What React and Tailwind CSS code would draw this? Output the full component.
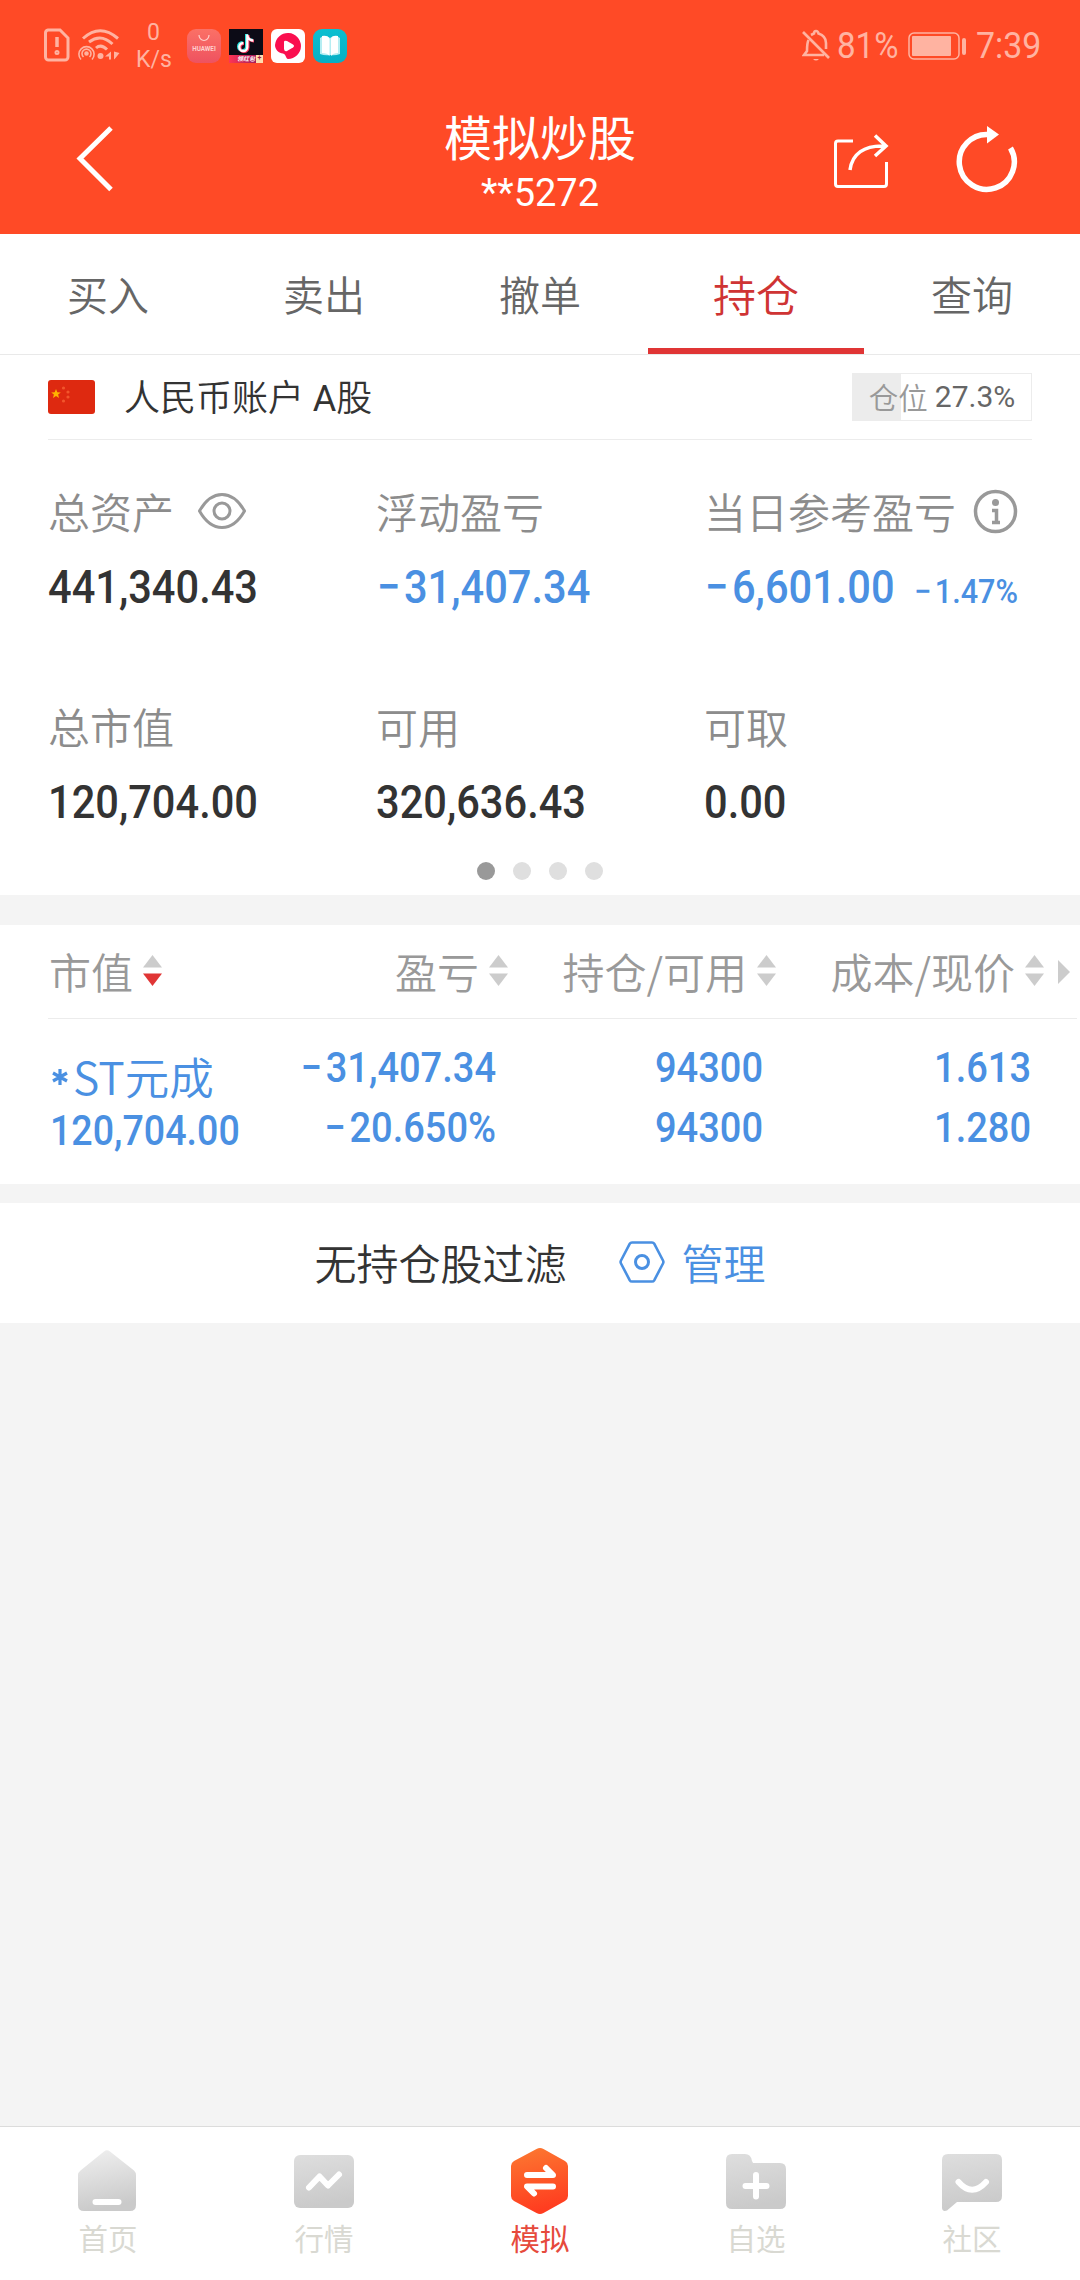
import React from "react";
import clsx from "clsx";

const TABS = ["买入", "卖出", "撤单", "持仓", "查询"];

const HOLDINGS = [
  {
    name: "ST元成",
    value: "120,704.00",
    profit: "−31,407.34",
    rate: "−20.650%",
    amount: "94300",
    available: "94300",
    cost: "1.613",
    price: "1.280",
  },
];

// Condensed figures; the minus sign gets a little extra room after it
function Num({ children, className }) {
  const negative = children.startsWith("−");
  return (
    <div className={clsx("font-['Roboto'] font-medium whitespace-nowrap", className)}>
      {negative && <span className="mr-[4px]">−</span>}
      {negative ? children.slice(1) : children}
    </div>
  );
}

function StatusBar() {
  return (
    <div className="h-[92px] flex items-start justify-between pl-[44px] pr-[39px] text-[#ffb3a1] font-['Roboto'] font-normal">
      <div className="flex items-start">
        <svg className="mt-[28px] w-[26px] h-[34px]" viewBox="0 0 26 34" fill="none" stroke="currentColor" strokeWidth="3">
          <path d="M4 2h12l8 8v19a3 3 0 0 1-3 3H4.500a3 3 0 0 1-3-3V5A3 3 0 0 1 4 2z" />
          <path d="M13 9v10" strokeWidth="3.500" />
          <circle cx="13" cy="24.500" r="1" />
        </svg>
        <svg className="mt-[28px] ml-[8px] w-[42px] h-[34px]" viewBox="0 0 42 34" fill="none" stroke="currentColor" strokeWidth="3">
          <path d="M5 10.500Q22 -5 40 10.500" />
          <path d="M11 14Q23 5 34.500 16" />
          <path d="M18 20Q23 15.500 29 21.500" />
          <circle cx="22.500" cy="28" r="3" fill="currentColor" stroke="none" />
          <g strokeWidth="1.600">
            <path d="M3 31.500A7.600 7.600 0 1 1 14 31.500" />
            <path d="M5.500 29A4.500 4.500 0 1 1 11.500 29" />
            <circle cx="8.500" cy="25.500" r="1.500" fill="currentColor" />
          </g>
          <path d="M33 23.500v8h-2v-3h-4zM36 23.500v8l1.500-1.500 4-5z" fill="currentColor" stroke="none" />
        </svg>
        <div className="ml-[16px] mt-[19px] w-[35px] text-center text-[23px] leading-[27px]">
          <div>0</div>
          <div>K/s</div>
        </div>
        <div className="ml-[16px] mt-[29px] flex gap-2">
          <div className="size-[34px] rounded-[9px] bg-gradient-to-b from-[#fb7066] to-[#ee5260] flex flex-col items-center text-[#ffd0cc]">
            <svg className="mt-[6px] w-[12px] h-[7px]" viewBox="0 0 12 7" fill="none" stroke="currentColor" strokeWidth="1.200">
              <path d="M1 0a5 5.500 0 0 0 10 0" />
            </svg>
            <span className="mt-[4px] text-[6.300px] leading-[6px] font-bold">HUAWEI</span>
          </div>
          <div className="size-[34px] bg-[#0c0b16] flex flex-col items-center justify-end">
            <svg className="w-[20px] h-[22px]" viewBox="0 0 20 22" fill="none" strokeWidth="3">
              <path d="M10.500 1v12.500a4 4 0 1 1-4-4M10.500 2a6 6 0 0 0 6 5" stroke="#25e5df" />
              <path d="M12 2v12.500a4 4 0 1 1-4-4M12 3a6 6 0 0 0 6 5" stroke="#fa3760" />
              <path d="M11.300 1.500V14a4 4 0 1 1-4-4M11.300 2.500a6 6 0 0 0 6 5" stroke="#fff" strokeWidth="2.300" />
            </svg>
            <div className="w-full h-[8px] bg-gradient-to-r from-[#ff3454] to-[#8d155b] flex items-center justify-end">
              <span className="text-[6px] leading-[8px] text-white font-bold italic mr-[1px] font-['Noto_Sans_CJK_SC']">领红包</span>
              <span className="w-[7px] h-[8px] bg-[#ffdfb0] text-[#a3204a] text-[7px] leading-[7px] text-center font-bold">+</span>
            </div>
          </div>
          <div className="size-[34px] rounded-[6px] bg-white">
            <svg viewBox="0 0 34 34">
              <path d="M4 16A13 13 0 1 1 17 30C15 30 15 25 12 24.500C8 24 4 21 4 16z" fill="#fa0f4f" />
              <path d="M13 13q0-2 3-1l6 3.500q2 1.500 0 3L16 22q-2.500 1-3-2z" fill="#fff" />
            </svg>
          </div>
          <div className="size-[34px] rounded-[9px] bg-gradient-to-b from-[#0bbfd0] to-[#08aec5]">
            <svg viewBox="0 0 34 34">
              <path d="M7 9q5-4 10 0 5-4 10 0v16q-5 2-10 1-5 1-10-1z" fill="#b5edf2" />
              <path d="M9 7q6-1 7.500 3v17q-2-3-7.500-3zM25 7q-6-1-7 3v17q2-3 7-3z" fill="#fff" />
            </svg>
          </div>
        </div>
      </div>
      <div className="mt-[26px] flex items-center h-[40px] text-[36px] leading-[40px]">
        <svg className="w-[29px] h-[34px]" viewBox="0 0 29 34" fill="none" stroke="currentColor" strokeWidth="2.600">
          <path d="M1 3l26 26" />
          <path d="M9 6q2-1 3-1.500 0-2.500 2-2.500t2.500 2.500Q24 7 24 14v6" />
          <path d="M6.500 11Q5 14 5 22l-3 4h20" />
          <path d="M11 30q3 3 6 0z" fill="currentColor" stroke="none" />
        </svg>
        <span className="ml-[6px] w-[66px] whitespace-nowrap origin-left scale-x-[0.92]">81%</span>
        <svg className="ml-[5px] w-[60px] h-[28px]" viewBox="0 0 60 28" fill="none" stroke="currentColor">
          <rect x="1" y="1" width="50" height="26" rx="5" strokeWidth="1.500" />
          <rect x="4" y="4" width="39" height="20" rx="1" fill="currentColor" stroke="none" />
          <rect x="54" y="6" width="4" height="17" rx="2" fill="currentColor" stroke="none" />
        </svg>
        <span className="ml-[8px] w-[65px] whitespace-nowrap origin-left scale-x-[0.94]">7:39</span>
      </div>
    </div>
  );
}

function Header() {
  return (
    <header className="h-[234px] bg-[#ff4a26]">
      <StatusBar />
      <div className="h-[142px] grid grid-cols-[360px_360px_360px] text-white">
        <svg className="ml-[75px] mt-[33px] w-[40px] h-[68px]" viewBox="0 0 40 68" fill="none" stroke="currentColor" strokeWidth="5">
          <path d="M36 3L5 33.500 36 64.500" />
        </svg>
        <div className="text-center">
          <h1 className="mt-[13px] h-[60px] text-[48px] leading-[60px] font-normal">模拟炒股</h1>
          <p className="mt-[6px] text-[38px] leading-[44px] font-['Roboto'] font-normal">**5272</p>
        </div>
        <div className="flex">
          <svg className="ml-[112px] mt-[42px] w-[58px] h-[60px]" viewBox="0 0 58 60" fill="none" stroke="currentColor" strokeWidth="3">
            <path d="M21 7H6q-2.500 0-2.500 2.500V50q0 2.500 2.500 2.500h46q2.500 0 2.500-2.500V28" />
            <path d="M18 36C20 20 32 11 53 12M43 1.500L54 12 43 22" strokeWidth="3.500" />
          </svg>
          <svg className="ml-[65px] mt-[31px] w-[66px] h-[74px]" viewBox="0 0 66 74" fill="none" stroke="currentColor" strokeWidth="5.500">
            <path d="M55.500 25A27.500 27.500 0 1 1 34 11.500" />
            <path d="M32 3l12 8.500-12 9z" fill="currentColor" stroke="none" />
          </svg>
        </div>
      </div>
    </header>
  );
}

function Tabs() {
  return (
    <nav className="h-[121px] bg-white border-b border-[#e9e9e9] grid grid-cols-5 text-center text-[#666]">
      {TABS.map((tab) => (
        <div
          key={tab}
          className={clsx(
            "h-[120px] pt-[29px] leading-[60px] border-b-[6px]",
            tab === "持仓" ? "border-[#e03535] text-[#cf3434] text-[43px]" : "border-transparent text-[41px]"
          )}
        >
          {tab}
        </div>
      ))}
    </nav>
  );
}

function Stat({ label, icon, value, blue, extra }) {
  return (
    <div>
      <div className="flex items-center h-[60px] text-[42px] leading-[60px] text-[#8c8c8c] whitespace-nowrap">
        {label}
        {icon}
      </div>
      <div
        className={clsx(
          "mt-[16px] h-[60px] leading-[60px] flex items-baseline whitespace-nowrap",
          blue ? "pl-[1px] text-[#4a90e2]" : "text-[#333]"
        )}
      >
        <Num className="text-[47px] origin-left scale-x-[0.885]">{value}</Num>
        {extra && <Num className="-ml-[5px] text-[34px] origin-left scale-x-[0.9]">{extra}</Num>}
      </div>
    </div>
  );
}

function Account() {
  return (
    <section className="h-[540px] bg-white px-12">
      <div className="h-[85px] flex items-center border-b border-[#ececec]">
        <svg className="w-[47px] h-[34px]" viewBox="0 0 47 34">
          <rect width="47" height="34" rx="3" fill="#de2910" />
          <path d="M8 9l1.300 3.200 3.500.2-2.700 2.200.9 3.400-3-1.900-3 1.900.9-3.400-2.700-2.200 3.500-.2z" fill="#ffb300" />
          <g fill="#f2552c">
            <circle cx="15.500" cy="8" r="1.600" />
            <circle cx="20" cy="12" r="1.600" />
            <circle cx="20" cy="17" r="1.600" />
            <circle cx="15.500" cy="21" r="1.600" />
          </g>
        </svg>
        <span className="ml-[29px] pt-[4px] text-[36px] leading-[50px] text-[#333] font-['Roboto','Noto_Sans_CJK_SC',sans-serif]">
          人民币账户 <span className="font-normal">A</span>股
        </span>
        <div className="ml-auto w-[180px] h-[48px] border border-[#ececec] bg-[linear-gradient(to_right,#ececec_48px,#fff_48px)] flex items-center justify-center whitespace-nowrap leading-[46px]">
          <span className="-mt-[2px] text-[29.500px] text-[#999]">仓位</span>
          <span className="ml-[7px] text-[30px] text-[#666] font-['Roboto'] font-normal">27.3%</span>
        </div>
      </div>
      <div className="pt-[41px] grid grid-cols-3 gap-y-[79px]">
        <Stat
          label="总资产"
          value="441,340.43"
          icon={
            <svg className="ml-[24px] w-[48px] h-[38px]" viewBox="0 0 48 38" fill="none" stroke="#999" strokeWidth="3">
              <path d="M1.500 19C8 7.500 15 2.500 24 2.500S40 7.500 46.500 19C40 30.500 33 35.500 24 35.500S8 30.500 1.500 19z" />
              <circle cx="24" cy="19" r="8" />
            </svg>
          }
        />
        <Stat label="浮动盈亏" value="−31,407.34" blue />
        <Stat
          label="当日参考盈亏"
          value="−6,601.00"
          blue
          extra="−1.47%"
          icon={
            <svg className="ml-[17px] shrink-0 w-[45px] h-[45px]" viewBox="0 0 45 45" fill="none" stroke="#999" strokeWidth="3.500">
              <circle cx="22.500" cy="22.500" r="20" />
              <circle cx="22.500" cy="13.500" r="3.500" fill="#999" stroke="none" />
              <path d="M19 21.500h4.500v12M19 33.500h8" />
            </svg>
          }
        />
        <Stat label="总市值" value="120,704.00" />
        <Stat label="可用" value="320,636.43" />
        <Stat label="可取" value="0.00" />
      </div>
      <div className="mt-[30px] flex justify-center gap-[18px]">
        <span className="size-[18px] rounded-full bg-[#999]" />
        <span className="size-[18px] rounded-full bg-[#dfdfdf]" />
        <span className="size-[18px] rounded-full bg-[#dfdfdf]" />
        <span className="size-[18px] rounded-full bg-[#dfdfdf]" />
      </div>
    </section>
  );
}

function SortHead({ label, active }) {
  return (
    <div className="flex items-center justify-end text-[42px] leading-[60px] text-[#999] whitespace-nowrap">
      {label}
      <svg className="ml-[10px] w-[19px] h-[31px]" viewBox="0 0 19 31">
        <path d="M0 12.500L9.500 0 19 12.500z" fill="#ccc" />
        <path d="M0 18.500h19L9.500 31z" fill={active ? "#e03535" : "#ccc"} />
      </svg>
    </div>
  );
}

function Pair({ top, bottom, className }) {
  return (
    <div className={clsx("pt-[19px] text-right text-[42px] leading-[60px]", className)}>
      <Num className="origin-right scale-x-[0.905]">{top}</Num>
      <Num className="origin-right scale-x-[0.905]">{bottom}</Num>
    </div>
  );
}

function Holdings() {
  return (
    <section className="mt-[30px] h-[259px] bg-white pl-12">
      <div className="h-[94px] mr-[3px] pb-[2px] border-b border-[#ececec] flex items-center">
        <div className="w-[114px]">
          <SortHead label="市值" active />
        </div>
        <div className="w-[346px]">
          <SortHead label="盈亏" />
        </div>
        <div className="w-[268px]">
          <SortHead label="持仓/可用" />
        </div>
        <div className="w-[268px]">
          <SortHead label="成本/现价" />
        </div>
        <svg className="ml-[14px] mt-[2px] w-[12px] h-[24px]" viewBox="0 0 12 24">
          <path d="M0 0l12 12L0 24z" fill="#ccc" />
        </svg>
      </div>
      {HOLDINGS.map((h) => (
        <div key={h.name} className="flex text-[#4a90e2]">
          <div className="w-[200px] pt-[27px]">
            <div className="flex items-center h-[60px] text-[44.500px] leading-[60px] whitespace-nowrap">
              <svg className="ml-[4px] mr-[5px] mt-[1px] w-[16px] h-[16px]" viewBox="0 0 16 16" stroke="currentColor" strokeWidth="3.200">
                <path d="M8 0v16M1 4l14 8M15 4L1 12" />
              </svg>
              {h.name}
            </div>
            <Num className="-mt-[5px] ml-[2px] text-[42px] leading-[60px] origin-left scale-x-[0.895]">{h.value}</Num>
          </div>
          <Pair className="w-[248px]" top={h.profit} bottom={h.rate} />
          <Pair className="w-[267px]" top={h.amount} bottom={h.available} />
          <Pair className="w-[268px]" top={h.cost} bottom={h.price} />
        </div>
      ))}
    </section>
  );
}

function FilterRow() {
  return (
    <section className="mt-[19px] h-[120px] pb-[2px] bg-white flex items-center justify-center text-[42px] leading-[60px]">
      <span className="text-[#333]">无持仓股过滤</span>
      <svg className="ml-[52px] w-[46px] h-[42px]" viewBox="0 0 46 42" fill="none" stroke="#4a90e2" strokeWidth="2.600" strokeLinejoin="round">
        <path d="M13 1.500h20q1.500 0 2.200 1.200L44 19.500q.8 1.500 0 3L35.200 39.300Q34.500 40.500 33 40.500H13q-1.500 0-2.200-1.200L2 22.500q-.8-1.500 0-3l8.800-16.800Q11.500 1.500 13 1.500z" />
        <circle cx="23" cy="21" r="6.500" strokeWidth="3" />
      </svg>
      <span className="ml-[17px] text-[#4a90e2]">管理</span>
    </section>
  );
}

const NAV_ITEMS = [
  {
    label: "首页",
    icon: (
      <>
        <path d="M26 6.500q3-2.500 6 0L56 25.500Q58 27.500 58 30v30q0 6-6 6H6q-6 0-6-6V30q0-2.500 2.500-4.500z" fill="url(#light)" stroke="none" />
        <path d="M17.500 57h23" />
      </>
    ),
  },
  {
    label: "行情",
    icon: (
      <>
        <rect y="10" width="60" height="53" rx="6" fill="url(#grey)" stroke="none" />
        <path d="M15 42.500L25.500 31.500 34 40.500 45 29.500" />
      </>
    ),
  },
  {
    label: "模拟",
    active: true,
    icon: (
      <>
        <path d="M26.500 4q3.500-2 7 0L55 16q3 1.800 3 5v30q0 3.200-3 5L33.500 68q-3.500 2-7 0L4 56q-3-1.800-3-5V21q0-3.200 3-5z" fill="url(#orange)" stroke="none" />
        <path d="M17 30h26L36 23M43 41.500H17L24 48.500" />
      </>
    ),
  },
  {
    label: "自选",
    icon: (
      <>
        <path d="M6 9h13q6 0 7 7l1 2h27q6 0 6 6v34q0 6-6 6H6q-6 0-6-6V15Q0 9 6 9z" fill="url(#grey)" stroke="none" />
        <path d="M19.500 41h21M30 30v21.500" />
      </>
    ),
  },
  {
    label: "社区",
    icon: (
      <>
        <path d="M6 9h48q6 0 6 6v36q0 6-6 6H15L5 65.500Q0 67 0 62.500V15Q0 9 6 9z" fill="url(#grey)" stroke="none" />
        <path d="M16.500 37Q30 52.500 44 37" />
      </>
    ),
  },
];

function BottomNav() {
  return (
    <nav className="mt-auto h-[154px] bg-white border-t border-[#dcdcdc] grid grid-cols-5 font-normal">
      {NAV_ITEMS.map((item) => (
        <div key={item.label} className="flex flex-col items-center pt-[18px]">
          <svg className="w-[60px] h-[72px]" viewBox="0 0 60 72" fill="none" stroke="#fff" strokeWidth="6" strokeLinecap="round" strokeLinejoin="round">
            <defs>
              <linearGradient id="light" x1="0" y1="0" x2="0.200" y2="1">
                <stop offset="0" stopColor="#f0f0f0" />
                <stop offset="1" stopColor="#cacaca" />
              </linearGradient>
              <linearGradient id="grey" x1="0" y1="0" x2="0.200" y2="1">
                <stop offset="0" stopColor="#dedede" />
                <stop offset="1" stopColor="#cacaca" />
              </linearGradient>
              <linearGradient id="orange" x1="0" y1="0" x2="0.200" y2="1">
                <stop offset="0" stopColor="#fc7a31" />
                <stop offset="1" stopColor="#ff3d20" />
              </linearGradient>
            </defs>
            {item.icon}
          </svg>
          <span className={clsx("text-[29.500px] leading-[40px]", item.active ? "text-[#e64a3c]" : "text-[#d9d9d2]")}>
            {item.label}
          </span>
        </div>
      ))}
    </nav>
  );
}

export default function App() {
  return (
    <div className="w-[1080px] h-[2280px] overflow-hidden flex flex-col bg-[#f4f4f4] font-[350] font-['Noto_Sans_CJK_SC',sans-serif]">
      <Header />
      <Tabs />
      <Account />
      <Holdings />
      <FilterRow />
      <BottomNav />
    </div>
  );
}
